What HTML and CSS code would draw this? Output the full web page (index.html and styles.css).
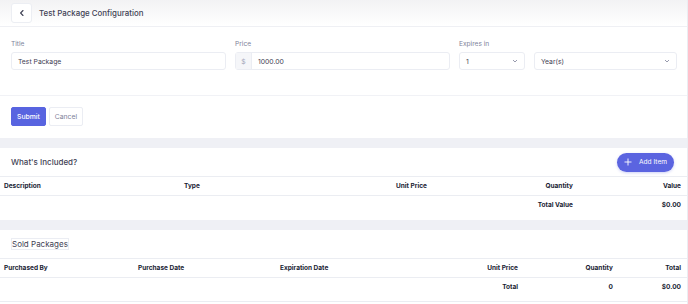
FILE: index.html
```html
<!DOCTYPE html>
<html>
<head>
<meta charset="utf-8">
<link rel="stylesheet" href="styles.css">
</head>
<body>
<div class="page">
  <header class="topbar">
    <button class="back"><svg width="8" height="8" viewBox="0 0 8 8"><path d="M5 1.5 L2.6 4 L5 6.5" fill="none" stroke="#3f4254" stroke-width="1.1" stroke-linecap="round" stroke-linejoin="round"/></svg></button>
    <span class="page-title">Test Package Configuration</span>
  </header>

  <section class="form">
    <div class="field">
      <label class="label">Title</label>
      <div class="input">Test Package</div>
    </div>
    <div class="field">
      <label class="label">Price</label>
      <div class="input group"><span class="addon">$</span><span class="gval">1000.00</span></div>
    </div>
    <div class="field">
      <label class="label">Expires in</label>
      <div class="input select"><span>1</span><svg width="6" height="4" viewBox="0 0 6 4"><path d="M1 1 L3 3 L5 1" fill="none" stroke="#7e8299" stroke-width="0.8"/></svg></div>
    </div>
    <div class="field">
      <label class="label">&nbsp;</label>
      <div class="input select"><span>Year(s)</span><svg width="6" height="4" viewBox="0 0 6 4"><path d="M1 1 L3 3 L5 1" fill="none" stroke="#7e8299" stroke-width="0.8"/></svg></div>
    </div>
  </section>

  <section class="actions">
    <button class="btn primary">Submit</button>
    <button class="btn light">Cancel</button>
  </section>

  <div class="band"></div>

  <section class="card">
    <div class="card-head">
      <h2 class="card-title">What's Included?</h2>
      <button class="add"><svg width="8" height="8" viewBox="0 0 8 8"><path d="M4 0.5 V7.5 M0.5 4 H7.5" stroke="#fff" stroke-width="0.9"/></svg>Add Item</button>
    </div>
    <div class="trow thead inc">
      <span>Description</span><span>Type</span><span>Unit Price</span><span class="r">Quantity</span><span class="r">Value</span>
    </div>
    <div class="trow tfoot inc">
      <span></span><span></span><span></span><span class="r">Total Value</span><span class="r">$0.00</span>
    </div>
  </section>

  <div class="band"></div>

  <section class="card last">
    <div class="card-head">
      <h2 class="card-title light">Sold Packages</h2>
    </div>
    <div class="trow thead sold">
      <span>Purchased By</span><span>Purchase Date</span><span>Expiration Date</span><span class="r">Unit Price</span><span class="r">Quantity</span><span class="r">Total</span>
    </div>
    <div class="trow tfoot sold">
      <span></span><span></span><span></span><span class="r">Total</span><span class="r">0</span><span class="r">$0.00</span>
    </div>
  </section>
</div>
</body>
</html>
```
FILE: styles.css
```css
* { box-sizing: border-box; margin: 0; padding: 0; }
html, body { background: #fff; }
body {
  font-family: "Inter", "Noto Sans", sans-serif;
  color: #3f4254;
  width: 688px;
  height: 304px;
  overflow: hidden;
}
.page { border-right: 1px solid #ebedf2; min-height: 304px; }

.topbar {
  height: 27px;
  display: flex;
  align-items: center;
  gap: 7px;
  padding-left: 11px;
  padding-bottom: 1px;
  background: linear-gradient(#f2f2f4, #ffffff);
  border-bottom: 1px solid #eff0f4;
}
.back {
  width: 21px; height: 20px;
  background: #fff;
  border: 1px solid #eceef3;
  border-radius: 3px;
  display: flex; align-items: center; justify-content: center;
}
.page-title { font-size: 7.9px; font-weight: 500; color: #3f4254; }

.form {
  display: grid;
  grid-template-columns: 215px 215px 66px 143px;
  column-gap: 9px;
  padding: 13px 11px 25px;
  border-bottom: 1px solid #f1f2f6;
}
.label { display: block; font-size: 6.6px; color: #7e8299; height: 12px; line-height: 8px; }
.input {
  height: 18px;
  border: 1px solid #ebedf3;
  border-radius: 3px;
  font-size: 6.8px;
  color: #3f4254;
  display: flex;
  align-items: center;
  padding: 0 6px;
}
.group { padding: 0; }
.addon {
  width: 16px; height: 100%;
  background: #f5f6f9;
  border-right: 1px solid #ebedf3;
  color: #a1a5b7;
  display: flex; align-items: center; justify-content: center;
}
.gval { padding-left: 6px; }
.select { justify-content: space-between; padding-right: 6px; }

.actions {
  display: flex;
  gap: 3px;
  padding: 11px 11px 12px;
}
.btn {
  height: 19px;
  font-family: inherit;
  font-size: 6.8px;
  font-weight: 500;
  border-radius: 2px;
  padding: 0 5px;
}
.primary { background: #5864e0; color: #fff; border: 1px solid #5864e0; }
.light { background: #fff; color: #7e8299; border: 1px solid #ebedf3; font-weight: 400; }

.band { height: 10px; background: #eff0f5; }

.card-head {
  height: 29px;
  display: flex;
  align-items: center;
  justify-content: space-between;
  padding: 0 13px 0 11px;
  border-bottom: 1px solid #ebedf2;
}
.card-title { font-size: 8px; font-weight: 500; color: #3f4254; }
.card-title.light { font-weight: 400; }
.add {
  height: 19px;
  display: flex; align-items: center; gap: 7px;
  padding: 0 7px;
  border: none;
  border-radius: 10px;
  background: #5b64e0;
  color: #fff;
  font-family: inherit;
  font-size: 6.6px;
  box-shadow: 0 1px 3px rgba(91,100,224,0.3);
}

.trow {
  display: grid;
  align-items: center;
  padding: 0 6px 0 4px;
  font-size: 6.5px;
  font-weight: 700;
  color: #181c32;
}
.trow .r { text-align: right; }
.inc { grid-template-columns: 180px 212px 100px 77px 1fr; }
.sold { grid-template-columns: 134px 142px 100px 138px 95px 1fr; }
.thead { height: 19px; border-bottom: 1px solid #ebedf2; }
.tfoot { height: 18px; }
.card { padding-bottom: 6px; }
.card.last { padding-bottom: 5px; border-bottom: 1px solid #ebedf2; }
```
